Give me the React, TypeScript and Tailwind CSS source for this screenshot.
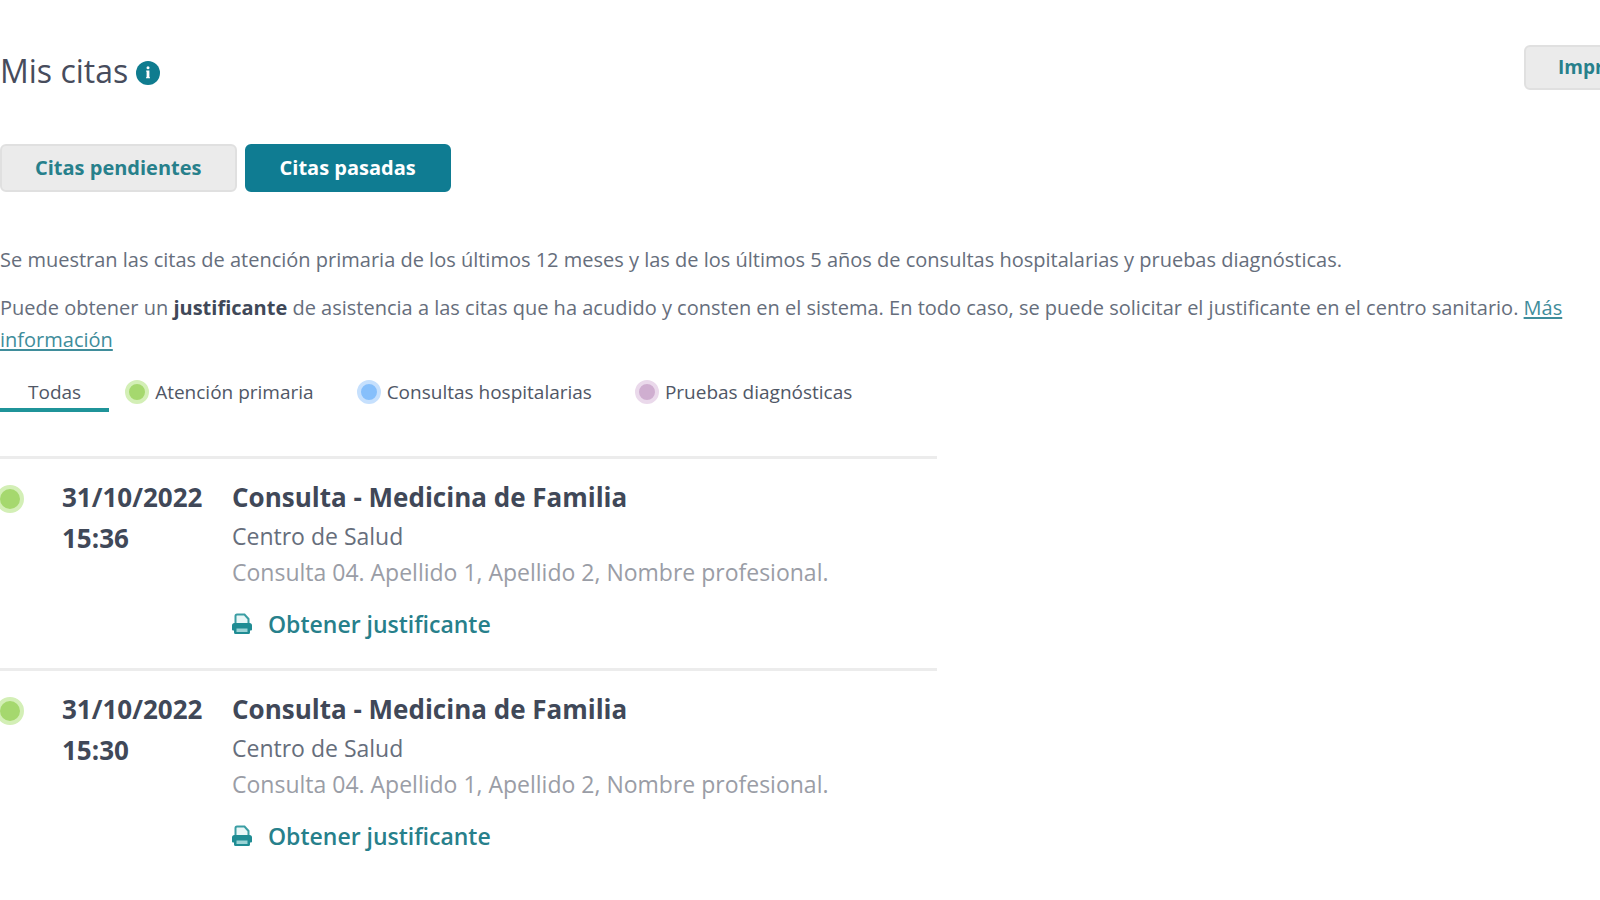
import React from "react";

type Appointment = { id: number; date: string; time: string; title: string; center: string; detail: string };

const appointments: Appointment[] = [
  {
    id: 1,
    date: "31/10/2022",
    time: "15:36",
    title: "Consulta - Medicina de Familia",
    center: "Centro de Salud",
    detail: "Consulta 04. Apellido 1, Apellido 2, Nombre profesional.",
  },
  {
    id: 2,
    date: "31/10/2022",
    time: "15:30",
    title: "Consulta - Medicina de Familia",
    center: "Centro de Salud",
    detail: "Consulta 04. Apellido 1, Apellido 2, Nombre profesional.",
  },
];

const filters = [
  { label: "Atención primaria", dot: "bg-[#a5d86e] border-[#d3efb6]" },
  { label: "Consultas hospitalarias", dot: "bg-[#86bffb] border-[#c6e0fd]" },
  { label: "Pruebas diagnósticas", dot: "bg-[#cfaed0] border-[#ead9eb]" },
];

function Dot({ className }: { className: string }) {
  return <span className={`shrink-0 rounded-full border-4 ${className}`} />;
}

function InfoIcon() {
  return (
    <svg viewBox="0 0 24 24" className="size-6" aria-hidden="true">
      <circle cx="12" cy="12" r="12" fill="#0f7c8f" />
      <circle cx="12" cy="6.800" r="1.500" fill="#fff" />
      <path d="M10.200 9.600h3.200v6.600h.6v1.100h-4v-1.100h.6v-5.500h-.4z" fill="#fff" />
    </svg>
  );
}

function PrinterIcon() {
  return (
    <svg viewBox="0 0 20 22" className="h-[22px] w-5" aria-hidden="true">
      <path d="M3.500 11V3a1.500 1.500 0 0 1 1.500-1.500h7.500L16.500 6v5" fill="#e9f7f7" stroke="#3a9da3" strokeWidth="2" />
      <path d="M2.500 10h15a2.500 2.500 0 0 1 2.500 2.500V16.500a1 1 0 0 1-1 1h-1v2a1.500 1.500 0 0 1-1.500 1.500h-13A1.500 1.500 0 0 1 2 19.500v-2H1a1 1 0 0 1-1-1v-4A2.500 2.500 0 0 1 2.500 10z" fill="#1f8c93" />
      <path d="M4.500 15.500h11v3.500h-11z" fill="#9ad3d5" />
    </svg>
  );
}

function AppointmentRow({ item }: { item: Appointment }) {
  return (
    <li className="flex border-t-3 border-[#ececec] pt-[18px] pb-7">
      <div className="w-[62px] shrink-0 pt-2">
        <Dot className="-ml-1 block size-7 border-[#d3efb6] bg-[#a5d86e]" />
      </div>
      <div className="w-[170px] shrink-0 text-[26px] leading-[41px] font-bold text-[#404858]">
        <p>{item.date}</p>
        <p>{item.time}</p>
      </div>
      <div>
        <h2 className="text-[26px] leading-[41px] font-bold text-[#404858]">{item.title}</h2>
        <p className="text-[23px] leading-9 text-[#666e7c]">{item.center}</p>
        <p className="text-[23px] leading-9 text-[#9a9da6]">{item.detail}</p>
        <a href="#justificante" className="mt-[18px] flex items-center gap-4 text-[23px] leading-8 font-semibold text-[#27808b]">
          <PrinterIcon />
          Obtener justificante
        </a>
      </div>
    </li>
  );
}

export default function App() {
  return (
    <main className="min-h-screen overflow-x-hidden bg-white pt-[45px] font-['Open_Sans','Noto_Sans',sans-serif] text-[#666e7c]">
      <header className="flex items-start justify-between">
        <div className="flex items-center gap-2 pt-1">
          <h1 className="text-[32px] leading-[44px] text-[#474c5c]">Mis citas</h1>
          <button type="button" aria-label="Información" className="mt-1">
            <InfoIcon />
          </button>
        </div>
        <div className="w-[76px]">
          <button type="button" className="h-[45px] rounded-md border-2 border-[#e0e0e0] bg-[#ebebeb] px-8 text-[19px] font-bold text-[#27808b]">
            Imprimir
          </button>
        </div>
      </header>

      <div className="mt-[51px] flex gap-2">
        <button type="button" className="h-12 rounded-md border-2 border-[#e0e0e0] bg-[#ebebeb] px-[33px] text-xl font-bold text-[#27808b]">
          Citas pendientes
        </button>
        <button type="button" className="h-12 rounded-md border-2 border-[#0f7c92] bg-[#0f7c92] px-[33px] text-xl font-bold text-white">
          Citas pasadas
        </button>
      </div>

      <div className="mt-13 text-xl leading-8">
        <p>
          Se muestran las citas de atención primaria de los últimos 12 meses y las de los últimos 5 años de consultas
          hospitalarias y pruebas diagnósticas.
        </p>
        <p className="mt-4">
          Puede obtener un <strong className="text-[#404858]">justificante</strong> de asistencia a las citas que ha
          acudido y consten en el sistema. En todo caso, se puede solicitar el justificante en el centro sanitario.{" "}
          <a href="#mas" className="text-[#3f8d9b] underline underline-offset-2">
            Más información
          </a>
        </p>
      </div>

      <nav className="mt-5 flex text-[19px] leading-8 font-medium text-[#505766]">
        <button type="button" className="mr-4 border-b-4 border-[#1f9499] px-7">
          Todas
        </button>
        {filters.map((f) => (
          <button key={f.label} type="button" className="mr-[43px] flex items-center gap-[6px] border-b-4 border-transparent">
            <Dot className={`size-6 ${f.dot}`} />
            {f.label}
          </button>
        ))}
      </nav>

      <ul className="mt-11 w-full max-w-[937px]">
        {appointments.map((a) => (
          <AppointmentRow key={a.id} item={a} />
        ))}
      </ul>
    </main>
  );
}
